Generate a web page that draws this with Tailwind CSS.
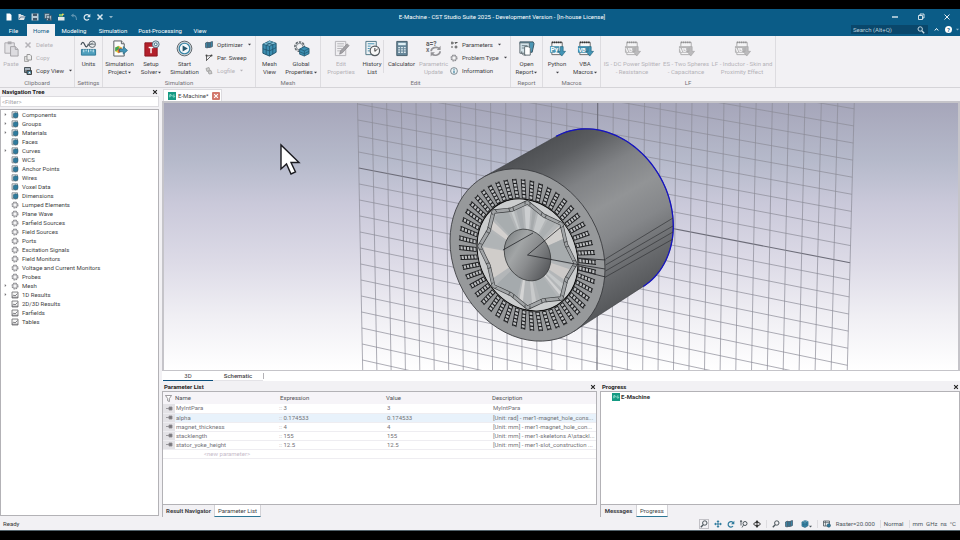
<!DOCTYPE html>
<html lang="en">
<head>
<meta charset="utf-8">
<title>E-Machine - CST Studio Suite 2025</title>
<script src="https://cdn.jsdelivr.net/npm/@tailwindcss/browser@4"></script>
</head>
<body class="h-screen overflow-hidden bg-black font-['Roboto','Noto_Sans',sans-serif] text-[6px] leading-[8px] text-[#3f3f45]">

<svg class="hidden">
  <symbol id="paste" viewBox="0 0 18 18"><path d="M2 3h10v11H2z" fill="#e4e3e6" stroke="#aaa9ad"/><path d="M5 1.5h4v3H5z" fill="#aaa9ad"/><path d="M8 7h5l3 3v7H8z" fill="#dddce0" stroke="#a3a2a6"/><path d="M13 7v3h3" fill="none" stroke="#a3a2a6"/></symbol>
  <symbol id="x" viewBox="0 0 8 8"><path d="M1.500 1.500l5 5M6.500 1.500l-5 5" stroke="currentColor" stroke-width="1.500" fill="none"/></symbol>
  <symbol id="copy" viewBox="0 0 8 8"><path d="M.5 2.500h4v5h-4z" fill="#ddd" stroke="#aaa"/><path d="M3 .5h3l1.500 1.500v4H3z" fill="#eee" stroke="#999"/></symbol>
  <symbol id="copyview" viewBox="0 0 8 8"><path d="M.5.5h6v5h-6z" fill="#7c8489" stroke="#4b5458"/><path d="M1 2h5" stroke="#cde"/><path d="M3 3.500h4.500v4H3z" fill="#3d7892" stroke="#444"/><path d="M4 6.500l1.500-2 1.500 2" fill="#fff"/></symbol>
  <symbol id="units" viewBox="0 0 18 18"><path d="M1 5q2-5 4 0t4-1" fill="none" stroke="#44505a" stroke-width="1.300"/><circle cx="13" cy="4.500" r="3.400" fill="#e8ebed" stroke="#59636a"/><path d="M8 6l6-3M10 4.500h6" stroke="#59636a" stroke-width=".8"/><path d="M1.500 10h15v6h-15z" fill="#4f9fbd" stroke="#2f7897"/><path d="M4 10v3M6.500 10v2M9 10v3M11.500 10v2M14 10v3" stroke="#d8eef5"/></symbol>
  <symbol id="simproj" viewBox="0 0 18 18"><path d="M3 1h8l3 3v13H3z" fill="#fcfcfc" stroke="#555b60"/><path d="M11 1v3h3" fill="#ddd" stroke="#555b60"/><path d="M4.500 8l3.500-2 3.500 2v4L8 14l-3.500-2z" fill="#e2c63b"/><path d="M4.500 8L8 6.500 8.500 10 4.500 12z" fill="#3da55b"/><path d="M7 10l4-2v4l-3 2z" fill="#d8583c"/><path d="M9 9.500h4V7l4.500 4-4.500 4v-2.500H9z" fill="#4294b6" stroke="#23657f" stroke-width=".7"/></symbol>
  <symbol id="setup" viewBox="0 0 18 18"><path d="M2 3h13v14H2z" fill="#b3202b" stroke="#8a141d"/><path d="M6 8h5M8.500 8v6" stroke="#fff" stroke-width="1.500"/><circle cx="13.500" cy="4.500" r="3.600" fill="#cfe0e8" stroke="#567282"/><circle cx="13.500" cy="4.500" r="1.500" fill="#fff" stroke="#3f6a80"/></symbol>
  <symbol id="start" viewBox="0 0 18 18"><circle cx="9" cy="9" r="7.800" fill="#c9ced2" stroke="#5b6368"/><circle cx="9" cy="9" r="5.600" fill="#f4f8fa" stroke="#3483a5" stroke-width="1.200"/><path d="M7 5.800l5.500 3.200L7 12.200z" fill="#25566c"/></symbol>
  <symbol id="cube" viewBox="0 0 18 18"><path d="M2 4.500L9 1l7 2.500v9.500l-7 4-7-3z" fill="#3d8eb1" stroke="#1d536b"/><path d="M2 4.500l7 2 7-3L9 1z" fill="#7fc0d8"/><path d="M9 6.500V17M2 4.500l7 2 7-3M5.500 5.500v10M12.500 5v10M2 9.300l7 2.200 7-3.500M5.500 2.800l7 2.200M12.500 2.300l-7 3.200" fill="none" stroke="#1d536b" stroke-width=".8"/></symbol>
  <symbol id="global" viewBox="0 0 18 18"><circle cx="7" cy="7" r="5" fill="#e6e8ea" stroke="#62696e" stroke-width="1.600" stroke-dasharray="2.500 1.200"/><circle cx="7" cy="7" r="3.500" fill="#f0f1f3" stroke="#62696e" stroke-width=".8"/><path d="M7 9.500l5-2.500 5 2v5.500L12 17l-5-2z" fill="#3d8eb1" stroke="#1d536b" stroke-width=".8"/><path d="M7 9.500l5 2 5-2.500M12 11.500V17M7 12.500l5 2 5-2.500" fill="none" stroke="#1d536b" stroke-width=".7"/></symbol>
  <symbol id="edit" viewBox="0 0 18 18"><path d="M2.500 1.500h11v15h-11z" fill="#efeef1" stroke="#b5b4b8"/><path d="M4.500 4h7M4.500 6.500h7M4.500 9h5M4.500 11.500h4" stroke="#b5b4b8"/><path d="M7 15l1-3.500 7-7.500 2 2-7 7.500z" fill="#a3a2a6" stroke="#858488" stroke-width=".7"/></symbol>
  <symbol id="history" viewBox="0 0 18 18"><path d="M2 1.500h11v14H2z" fill="#eef2f4" stroke="#4d7585"/><path d="M4 4h7M4 6.500h3M4 9h2M4 11.500h2" stroke="#3d8eb1"/><circle cx="11.500" cy="11.500" r="5" fill="#f7f7f7" stroke="#555b60" stroke-width="1.300"/><path d="M11.500 8.500v3.500l3-2.500" fill="none" stroke="#333"/></symbol>
  <symbol id="calc" viewBox="0 0 18 18"><path d="M4 1.500h11v15H4z" fill="#67879a" stroke="#455c69"/><path d="M5.500 3h8v2.500h-8z" fill="#dff0f5"/><path d="M5.500 8h8M5.500 10.500h8M5.500 13h8" stroke="#d9e6ec" stroke-width="1.400" stroke-dasharray="2 1"/></symbol>
  <symbol id="param" viewBox="0 0 18 18"><text x="1" y="6" font-size="7" font-weight="700" fill="#5e5d61">a=?</text><text x="1" y="13" font-size="7" font-weight="700" fill="#77767a">x</text><path d="M6.500 12a5 4 0 0 1 9-2.500M16 12a5 4 0 0 1-9 2.500" fill="none" stroke="#949397" stroke-width="1.800"/><path d="M16.500 6v4.500h-4zM6 17.500V13h4.500z" fill="#949397"/></symbol>
  <symbol id="report" viewBox="0 0 18 18"><path d="M2 2h14l1 2-2 9H4z" fill="#4b96b5" stroke="#35515f"/><path d="M2 3h10v11H2z" fill="#d5e4ea" stroke="#5c6970"/><path d="M4 6h6M4 8.500h3" stroke="#6b7c85"/><path d="M7 7h4l2 2v7H7z" fill="#fff" stroke="#5c6970"/><path d="M4 12q-1 4 4 4" fill="none" stroke="#5c6970"/></symbol>
  <symbol id="py" viewBox="0 0 18 18"><path d="M3 2.500h11v13H3z" fill="#f7f7f8" stroke="#666"/><path d="M3 2.500h11" stroke="#333" stroke-width="2" stroke-dasharray="1.500 .7"/><path d="M1 6.500h10v7H1z" fill="#4f97b3"/><text x="1.500" y="12.500" font-size="7" font-weight="700" fill="#fff">Py</text><path d="M12 7h3v5h2.500L13.500 17l-4-5H12z" fill="#4294b6" stroke="#23657f" stroke-width=".7"/></symbol>
  <symbol id="vba" viewBox="0 0 18 18"><path d="M3 2.500h11v13H3z" fill="#f7f7f8" stroke="#666"/><path d="M3 2.500h11" stroke="#333" stroke-width="2" stroke-dasharray="1.500 .7"/><path d="M1 6.500h11v7H1z" fill="#3f8aa9"/><text x="1.500" y="12.300" font-size="6" font-weight="700" fill="#fff">VB</text><path d="M12 7h3v5h2.500L13.500 17l-4-5H12z" fill="#4294b6" stroke="#23657f" stroke-width=".7"/></symbol>
  <symbol id="opt" viewBox="0 0 8 8"><path d="M.5 2l2-1v6l-2-.5zM3 1.500h2v5H3zM5.500 1l2-.5v5l-2 1z" fill="#3c86a6" stroke="#345" stroke-width=".6"/></symbol>
  <symbol id="sweep" viewBox="0 0 8 8"><path d="M1.500 7V2l5-.5L2 6" fill="none" stroke="#555" stroke-width=".9"/><circle cx="1.500" cy="1.500" r="1" fill="#444"/><circle cx="6.500" cy="1.500" r="1" fill="#444"/></symbol>
  <symbol id="log" viewBox="0 0 8 8"><path d="M1 1.500l3-1 1 3-3 1zM3 4l3-.5 1 3-3 .5z" fill="#ccc" stroke="#aaa"/></symbol>
  <symbol id="params" viewBox="0 0 8 8"><path d="M1 2h3M5.500 1.500h2M1 6h2M4.500 6h3M2 .5v3M6 4.500v3M5 1l1 2" stroke="#555" stroke-width="1"/></symbol>
  <symbol id="gear" viewBox="0 0 8 8"><circle cx="4" cy="4" r="2.900" fill="none" stroke="#8a8a8f" stroke-width="1.200" stroke-dasharray="1.500 .78"/><circle cx="4" cy="4" r="2.200" fill="#f4f4f5" stroke="#8a8a8f" stroke-width=".8"/></symbol>
  <symbol id="info" viewBox="0 0 8 8"><circle cx="4" cy="4" r="3.400" fill="#eef3f5" stroke="#66757d" stroke-width=".8"/><path d="M4 3.500v2.700M4 1.700v1" stroke="#2b7697" stroke-width="1.100"/></symbol>
  <symbol id="tcube" viewBox="0 0 8 8"><path d="M1 .8h5.500v6H1z" fill="#e8ecee" stroke="#777e83" stroke-width=".8"/><path d="M2.300 2.700l2.200-1 2.500.8v3L4.800 7 2.300 6z" fill="#2f7b9d" stroke="#28586d" stroke-width=".5"/></symbol>
  <symbol id="plot" viewBox="0 0 8 8"><path d="M1 1h6v6H1z" fill="#f6f6f6" stroke="#69696d" stroke-width=".8"/><path d="M1.500 5l1.500-1 1 1 2.500-2.500M1 6.200h6" fill="none" stroke="#55555a" stroke-width=".7"/></symbol>
  <symbol id="snap" viewBox="0 0 8 8"><path d="M.5 1h6v5h-6z" fill="#e3e8ea" stroke="#4c565c" stroke-width=".8"/><path d="M.5 2.500h6M2.500 1v5" stroke="#4c565c" stroke-width=".6"/><circle cx="5.800" cy="5.500" r="1.700" fill="#2f7b9d" stroke="#28586d" stroke-width=".6"/></symbol>
  <symbol id="cst" viewBox="0 0 9 9"><path d="M0 0h9v9H0z" fill="#159a83"/><path d="M2 6V3h1.500q1.500 1 0 1.500H2M7.500 3.500q-2-1-2 1t2 1V4.500" fill="none" stroke="#b9efe3" stroke-width=".8"/></symbol>
  <symbol id="mag" viewBox="0 0 8 8"><circle cx="4.800" cy="3" r="2.200" fill="none" stroke="currentColor"/><path d="M3.200 4.700L.8 7.300" stroke="currentColor" stroke-width="1.300"/></symbol>
  <symbol id="tri" viewBox="0 0 4 4"><path d="M0 1h4L2 3.200z" fill="currentColor"/></symbol>
  <symbol id="redo" viewBox="0 0 8 8"><path d="M6.200 3A2.700 2.700 0 1 0 6 6" fill="none" stroke="currentColor" stroke-width="1.200"/><path d="M7.300.8v3.400H4z" fill="currentColor"/></symbol>
  <symbol id="undo" viewBox="0 0 8 8"><path d="M2 2.500q4.500-1 4.500 4.500" fill="none" stroke="currentColor" stroke-width="1.100"/><path d="M3.500.5v4L.8 2.500z" fill="currentColor"/></symbol>
  <symbol id="pan" viewBox="0 0 8 8"><path d="M4 0l1.500 2h-1v1.500H6v-1L8 4 6 5.500v-1H4.500V6h1L4 8 2.500 6h1V4.500H2v1L0 4l2-1.500v1h1.500V2h-1z" fill="#2f7b9d"/></symbol>
</svg>

<div class="flex h-full flex-col border-y-[9px] border-black bg-[#f2f1f4]">

  <header class="shrink-0 bg-[#0b5c87] text-white">
    <div class="flex h-[15px] items-center justify-between">
      <div class="flex items-center gap-[5px] pl-[5px] text-[#dbe8ef]">
        <button aria-label="New"><svg class="size-2" viewBox="0 0 8 8"><path d="M1.500.5h3.500l1.500 1.500v5.500h-5z" fill="#fff"/></svg></button>
        <button aria-label="Open"><svg class="size-2" viewBox="0 0 8 8"><path d="M.5 1h2l1 1h2v1h2L6 7H.5z" fill="#dfe5e8"/><path d="M1 6.500L2.500 4h5" stroke="#357" fill="none" stroke-width=".7"/></svg></button>
        <button aria-label="Save"><svg class="size-2" viewBox="0 0 8 8"><path d="M.5.5h7v7h-7z" fill="#b8cad5"/><path d="M2 .5h4v2.500H2zM2 5h4v2.500H2z" fill="#41576a"/></svg></button>
        <button aria-label="Save all"><svg class="size-2" viewBox="0 0 8 8"><path d="M.5.5h5v5h-5zM2.500 2.500h5v5h-5z" fill="#a7b9c5" stroke="#33495c" stroke-width=".6"/><path d="M4 5.500h2.500v2H4z" fill="#33495c"/></svg></button>
        <button aria-label="Export"><svg class="size-2" viewBox="0 0 8 8"><path d="M1 4h6.500v3.500H1z" fill="#e4e8ea"/><path d="M2 1h3l1 2.500H2z" fill="#7cc46e"/><path d="M5 .5l2.500.5L5 3z" fill="#f2d75b"/></svg></button>
        <button aria-label="Undo" class="text-[#5f93b0]"><svg class="size-2"><use href="#undo"/></svg></button>
        <button aria-label="Redo"><svg class="size-2"><use href="#redo"/></svg></button>
        <button aria-label="Delete"><svg class="size-2"><use href="#x"/></svg></button>
        <button aria-label="Customize" class="text-[#8fb4c8]"><svg class="size-1"><use href="#tri"/></svg></button>
      </div>
      <h1>E-Machine - CST Studio Suite 2025 - Development Version - [In-house License]</h1>
      <div class="flex items-center justify-end gap-[18px] pr-[9px]">
        <button aria-label="Minimize"><svg class="size-2" viewBox="0 0 8 8"><path d="M1 4h6" stroke="#fff" stroke-width="1.200"/></svg></button>
        <button aria-label="Restore"><svg class="size-2" viewBox="0 0 8 8"><path d="M1.500 2.500h4v4h-4zM3 2.500V1h4v4H5.500" fill="none" stroke="#fff" stroke-width=".8"/></svg></button>
        <button aria-label="Close"><svg class="size-2" viewBox="0 0 8 8"><path d="M1.500 1.500l5 5M6.500 1.500l-5 5" stroke="#fff" stroke-width=".9"/></svg></button>
      </div>
    </div>
    <div class="flex h-3 items-stretch justify-between">
      <nav class="flex leading-[13px]">
        <a href="#" class="w-[27px] text-center">File</a>
        <a href="#" class="w-7 bg-[#f2f1f4] text-center text-[#0b5c87]">Home</a>
        <a href="#" class="w-[38px] text-center">Modeling</a>
        <a href="#" class="w-10 text-center">Simulation</a>
        <a href="#" class="w-[54px] text-center">Post-Processing</a>
        <a href="#" class="w-[26px] text-center">View</a>
      </nav>
      <div class="flex items-center gap-[6px] pb-px">
        <label class="flex h-[9px] w-[77px] items-center bg-[#0a476b] pr-[3px]"><input type="text" aria-label="Search" placeholder="Search (Alt+Q)" class="w-full min-w-0 bg-transparent pl-[2px] placeholder:text-[#b9cfdb]"><svg class="size-2 shrink-0 -scale-x-100 text-[#c5d8e2]"><use href="#mag"/></svg></label>
        <button aria-label="Collapse ribbon"><svg class="size-[5px]" viewBox="0 0 5 5"><path d="M.8 3.500l1.700-2 1.700 2" fill="none" stroke="#fff"/></svg></button>
        <button aria-label="Help" class="size-[7px] rounded-full bg-white text-center font-bold leading-[7px] text-[#0b5c87]">?</button>
        <svg class="-ml-[2px] mr-px size-[3px] text-[#8fb4c8]"><use href="#tri"/></svg>
      </div>
    </div>
  </header>

  <section id="ribbon" aria-label="Ribbon" class="flex h-[52px] shrink-0 overflow-hidden border-b border-[#d5d4d8]"></section>

  <main class="flex min-h-0 flex-1 gap-[3px]">
    <aside class="flex w-[159px] shrink-0 flex-col pb-px">
      <div class="flex h-2 items-center justify-between pl-[2px] pr-px font-bold text-[#222]"><h2>Navigation Tree</h2><button aria-label="Close navigation tree"><svg class="size-[6px]"><use href="#x"/></svg></button></div>
      <input type="text" aria-label="Filter" placeholder="&lt;Filter&gt;" class="mb-[2px] h-[11px] border border-[#dddce0] bg-white pl-px placeholder:text-[#a5a4a8]">
      <ul id="tree" class="min-h-0 flex-1 overflow-hidden border border-[#b3b2b6] bg-white"></ul>
    </aside>

    <div class="flex min-w-0 flex-1 flex-col">
      <div class="flex h-[13px] shrink-0 pl-px">
        <div class="mt-px flex w-[59px] items-center gap-[2px] border border-b-0 border-[#dcdbdf] bg-white pl-1"><svg class="size-2 shrink-0"><use href="#cst"/></svg><span>E-Machine*</span><button aria-label="Close tab" class="ml-px flex size-2 shrink-0 items-center justify-center rounded-[1px] bg-[#d2776b] text-white"><svg class="size-[6px]"><use href="#x"/></svg></button></div>
      </div>
      <div class="min-h-0 flex-1 border-2 border-b border-[#c5c4c9]">
        <svg class="block size-full bg-white" viewBox="164 103 794 267" preserveAspectRatio="xMidYMid slice" role="img" aria-label="3D model view">
          <defs>
            <linearGradient id="sky" x1="0" y1="0" x2="0" y2="1"><stop offset="0" stop-color="#a6a6ba"/><stop offset=".22" stop-color="#b6bacb"/><stop offset=".38" stop-color="#cac9da"/><stop offset=".6" stop-color="#dddbe7"/><stop offset=".8" stop-color="#f0eff4"/><stop offset="1" stop-color="#fff"/></linearGradient>
            <linearGradient id="bodyFill" gradientUnits="userSpaceOnUse" x1="523" y1="153" x2="614" y2="309"><stop offset="0" stop-color="#4e5053"/><stop offset=".12" stop-color="#5b5d60"/><stop offset=".3" stop-color="#808285"/><stop offset=".48" stop-color="#929496"/><stop offset=".65" stop-color="#85878a"/><stop offset=".85" stop-color="#66686b"/><stop offset="1" stop-color="#55575a"/></linearGradient>
            <linearGradient id="bore" x1="0" y1=".1" x2="1" y2=".7"><stop offset="0" stop-color="#777b7d"/><stop offset=".35" stop-color="#a2a5a6"/><stop offset=".6" stop-color="#8a8c8e"/><stop offset="1" stop-color="#55575a"/></linearGradient>
          </defs>
          <path d="M-500 103h2500v267H-500z" fill="url(#sky)"/>
          <g id="grid" fill="none" stroke="#8b8b96" stroke-width=".7"></g>
          <g id="body"></g>
          <path d="M605.500 259L673 218M605.500 265L673 226M605.500 271L673 232M605.500 277L673 239" fill="none" stroke="#333538" stroke-width=".7"/>
          <g transform="matrix(.775 .14 0 .85 527.500 255)">
            <circle r="100" fill="#97999b" stroke="#35373a"/>
            <g id="slots"></g>
            <circle r="65" fill="#b3b6b8" stroke="#111" stroke-width="1.600"/>
            <g id="facets"></g>
            <g id="magnets"></g>
            <circle r="30" fill="url(#bore)" stroke="#3a3c3e"/>
          </g>
          <path d="M527.500 255L561 227M527.500 255L575 264L605 269M503 250L533 233M578 258L605.500 260M578 270L605.500 277" fill="none" stroke="#232528" stroke-width=".8"/>
          <path d="M281 145v24l5.500-5 4.500 10 4.500-2-4.500-9.500h8z" fill="#fff" stroke="#1b1b20" stroke-width="1.400"/>
        </svg>
      </div>
      <div class="flex h-[10px] shrink-0 bg-white">
        <button class="ml-px w-[50px] border-b border-[#0b4f7d] text-center">3D</button>
        <button class="w-[50px] border-b border-[#e4e3e7] text-center font-medium">Schematic</button>
        <span class="my-[2px] border-l border-[#b3b2b6]"></span>
      </div>

      <div class="flex h-[136px] shrink-0 gap-[3px] pt-[2px]">
        <section class="flex min-w-0 flex-[435] flex-col">
          <div class="flex h-2 items-center justify-between pl-[2px] pr-px font-bold text-[#222]"><h2>Parameter List</h2><button aria-label="Close parameter list"><svg class="size-[6px]"><use href="#x"/></svg></button></div>
          <div class="min-h-0 flex-1 overflow-hidden border border-[#b3b2b6] bg-white">
            <table class="w-full table-fixed text-left text-[#737277]">
              <colgroup><col class="w-3"><col class="w-[104px]"><col class="w-[107px]"><col class="w-[105px]"><col></colgroup>
              <thead><tr class="h-3 bg-[#f6f4f8] text-[#505055]"><th aria-label="Filter"><svg class="ml-[2px] size-[7px]" viewBox="0 0 8 8"><path d="M.5.5h7L5 4v3.500l-2-1V4z" fill="#fff" stroke="#8a898d"/></svg></th><th class="font-normal">Name</th><th class="pl-px font-normal">Expression</th><th class="font-normal">Value</th><th class="pl-px font-normal">Description</th></tr></thead>
              <tbody id="rows"></tbody>
            </table>
          </div>
          <div class="flex h-3 shrink-0 items-stretch">
            <button class="w-[52px] border-l border-[#b3b2b6] text-center font-bold">Result Navigator</button>
            <button class="w-[47px] border border-t-0 border-[#d3d2d6] border-b-[#2c7696] bg-white text-center">Parameter List</button>
          </div>
        </section>
        <section class="flex min-w-0 flex-[360] flex-col">
          <div class="flex h-2 items-center justify-between pl-[2px] pr-px font-bold text-[#222]"><h2>Progress</h2><button aria-label="Close progress"><svg class="size-[6px]"><use href="#x"/></svg></button></div>
          <div class="flex min-h-0 flex-1 items-start border border-[#b3b2b6] bg-white pl-[11px] pt-px text-[#333]"><svg class="size-2"><use href="#cst"/></svg><span class="pl-px font-bold">E-Machine</span></div>
          <div class="flex h-3 shrink-0 items-stretch">
            <button class="w-9 border-l border-[#b3b2b6] text-center font-bold">Messages</button>
            <button class="w-8 border border-t-0 border-[#d3d2d6] border-b-[#2c7696] bg-white text-center">Progress</button>
          </div>
        </section>
      </div>
    </div>
  </main>

  <footer class="flex h-[14px] shrink-0 items-center justify-between border-b border-[#53636c] pl-[3px] pr-1 text-[#333]">
    <span>Ready</span>
    <div class="flex items-center gap-[5px] text-[#4c565c]">
      <button aria-label="Zoom window" class="border border-[#c2c1c6]"><svg class="size-2"><use href="#mag"/></svg></button>
      <button aria-label="Pan"><svg class="size-2"><use href="#pan"/></svg></button>
      <button aria-label="Rotate" class="text-[#2f7b9d]"><svg class="size-2"><use href="#redo"/></svg></button>
      <button aria-label="Zoom"><svg class="size-2" viewBox="0 0 8 8"><circle cx="5" cy="3.500" r="2" fill="none" stroke="#4c565c"/><path d="M3.500 5L2 7.500M1 .5v5M0 2l1-1.500L2 2" fill="none" stroke="#4c565c" stroke-width=".9"/></svg></button>
      <button aria-label="Rotate view"><svg class="size-2" viewBox="0 0 8 8"><path d="M4 0l1.500 2h-3zM4 8l1.500-2h-3z" fill="#333"/><ellipse cx="4" cy="4" rx="3.300" ry="1.600" fill="none" stroke="#333"/><path d="M4 1v6" stroke="#333"/></svg></button>
      <span class="h-2 border-l border-[#dddce0]"></span>
      <button aria-label="Find"><svg class="size-2"><use href="#mag"/></svg></button>
      <button aria-label="Cutting plane"><svg class="size-2"><use href="#opt"/></svg></button>
      <button aria-label="View" class="ml-[3px] flex items-end"><svg class="size-2"><use href="#cube"/></svg><svg class="size-[3px]"><use href="#tri"/></svg></button>
      <span class="h-2 border-l border-[#dddce0]"></span>
      <button aria-label="Snap"><svg class="size-2"><use href="#snap"/></svg></button>
      <span>Raster=20.000</span>
      <span class="border-l border-[#dddce0] pl-[3px]">Normal</span>
      <span class="flex gap-[3px] border-l border-[#dddce0] pl-[3px]"><span>mm</span><span>GHz</span><span>ns</span><span>°C</span></span>
    </div>
  </footer>
</div>

<script>
const caret = '<svg class="ml-px inline-block size-[3px] align-middle"><use href="#tri"/></svg>';
// Large ribbon button: width class, icon, two label lines, state (1 disabled, 2 disabled with grey icon), caret
const big = (w, icon, a, b, off, menu) =>
  `<button class="${w} ${off ? 'text-[#b5b3b8]' : ''} flex shrink-0 flex-col items-center whitespace-nowrap"><svg class="${off === 2 ? 'grayscale opacity-50' : ''} mb-[3px] size-[17px]"><use href="#${icon}"/></svg><span>${a}</span><span>${b}${menu ? caret : ''}</span></button>`;
const small = (icon, t, off, menu) =>
  `<button class="${off ? 'text-[#b5b3b8]' : ''} flex h-[13px] items-center gap-1 whitespace-nowrap"><svg class="size-2"><use href="#${icon}"/></svg><span>${t}</span>${menu ? '<svg class="ml-px size-[3px]"><use href="#tri"/></svg>' : ''}</button>`;
const col = s => `<div class="-mt-[2px] flex flex-col pl-[2px]">${s}</div>`;
const group = (w, name, s) =>
  `<div class="${w} flex shrink-0 flex-col justify-between border-r border-[#dddce0]"><div class="flex h-[41px] pt-1">${s}</div><div class="text-center text-[#737277]">${name}</div></div>`;
document.getElementById('ribbon').innerHTML =
  group('w-[75px]', 'Clipboard', big('w-[22px]', 'paste', 'Paste', '', 1) + col(small('x', 'Delete', 1) + small('copy', 'Copy', 1) + small('copyview', 'Copy View', 0, 1))) +
  group('w-[28px]', 'Settings', big('w-[27px]', 'units', 'Units', '')) +
  group('w-[153px]', 'Simulation', big('w-[33px]', 'simproj', 'Simulation', 'Project', 0, 1) + big('w-[30px]', 'setup', 'Setup', 'Solver', 0, 1) + big('w-[37px]', 'start', 'Start', 'Simulation') + col(small('opt', 'Optimizer', 0, 1) + small('sweep', 'Par. Sweep') + small('log', 'Logfile', 1, 1))) +
  group('w-[65px]', 'Mesh', big('w-[27px]', 'cube', 'Mesh', 'View') + big('w-[36px]', 'global', 'Global', 'Properties', 0, 1)) +
  group('w-[190px]', 'Edit', big('w-[40px]', 'edit', 'Edit', 'Properties', 1) + big('w-[22px]', 'history', 'History', 'List') + '<span class="mb-1 border-l border-[#dddce0]"></span>' + big('w-[35px]', 'calc', 'Calculator', '') + big('w-[29px]', 'param', 'Parametric', 'Update', 1) + col(small('params', 'Parameters', 0, 1) + small('gear', 'Problem Type', 0, 1) + small('info', 'Information'))) +
  group('w-[32px]', 'Report', big('w-[31px]', 'report', 'Open', 'Report', 0, 1)) +
  group('w-[58px]', 'Macros', big('w-[28px]', 'py', 'Python', '', 0, 1) + big('w-[28px]', 'vba', 'VBA', 'Macros', 0, 1)) +
  group('w-[175px]', 'LF', big('w-[62px]', 'vba', 'IS - DC Power Splitter', '- Resistance', 2) + big('w-[46px]', 'vba', 'ES - Two Spheres', '- Capacitance', 2) + big('w-[66px]', 'vba', 'LF - Inductor - Skin and', 'Proximity Effect', 2));

const tree = [['Components','tcube',1],['Groups','tcube',1],['Materials','tcube',1],['Faces','tcube'],['Curves','tcube',1],['WCS','tcube'],['Anchor Points','tcube'],['Wires','tcube'],['Voxel Data','tcube'],['Dimensions','tcube'],['Lumped Elements','gear'],['Plane Wave','gear'],['Farfield Sources','gear'],['Field Sources','gear'],['Ports','gear'],['Excitation Signals','gear'],['Field Monitors','gear'],['Voltage and Current Monitors','gear'],['Probes','gear'],['Mesh','gear',1],['1D Results','plot',1],['2D/3D Results','plot'],['Farfields','plot'],['Tables','plot']];
document.getElementById('tree').innerHTML = tree.map(([t, icon, open]) =>
  `<li class="flex h-[9px] items-center pl-[3px]"><svg class="size-[3px] -rotate-90 text-[#77767a] ${open ? '' : 'invisible'}"><use href="#tri"/></svg><svg class="ml-1 size-2"><use href="#${icon}"/></svg><span class="pl-[3px]">${t}</span></li>`).join('');

const params = [['MyIntPara','3','MyIntPara'],['alpha','0.174533','[Unit: rad] - mer1-magnet_hole_cons...'],['magnet_thickness','4','[Unit: mm] - mer1-magnet_hole_con...'],['stacklength','155','[Unit: mm] - mer1-skeletons A\\stackl...'],['stator_yoke_height','12.5','[Unit: mm] - mer1-slot_construction ...']];
document.getElementById('rows').innerHTML = params.map(([n, v, d], i) =>
  `<tr class="h-[9px] border-b border-[#eeedf1] ${i === 1 ? 'bg-[#e8f2fb]' : ''}"><td class="bg-[#e3e2e6]"><svg class="ml-[3px] h-[5px] w-[7px]" viewBox="0 0 7 5"><path d="M0 2.500h3M3 1h3v3H3z" stroke="#8a898d" fill="#77767a" stroke-width=".8"/></svg></td><td class="pl-px">${n}</td><td><span class="text-[#aaa9ad]">::</span> ${v}</td><td class="pl-px">${v}</td><td class="whitespace-nowrap pl-[2px]">${d}</td></tr>`).join('') +
  '<tr class="h-[9px] border-b border-[#eeedf1]"><td></td><td class="pl-[29px] text-[#c7bccb]">&lt;new parameter&gt;</td><td></td><td></td><td></td></tr>';

// Reference grid plane, drawn in perspective
const lx = y => 357.5 + (y - 103) / 267 * 5.2, rx = y => 854.3 - (y - 103) / 267 * 7;
let g = '';
for (let k = -9; k <= 13; k++) {
  const a = 168 + 16 * k, b = 262.7 + 17.1 * k;
  g += `<path d="M${lx(a)} ${a}L${rx(b)} ${b}"${k ? '' : ' stroke="#6c6c78" stroke-width="1.1"'}/>`;
}
for (let j = 0; j <= 32; j++) {
  const f = (14.5 * j + .032 * j * j) / 496.8;
  g += `<path d="M${357.5 + 496.8 * f} 103L${362.7 + 484.6 * f} 370"${j === 16 ? ' stroke="#6c6c78" stroke-width="1.1"' : ''}/>`;
}
document.getElementById('grid').innerHTML = g;

// Cylinder side: hull of the front and back rims
const rim = (s, cx, cy, deg) => {
  const u = s * Math.cos(deg * Math.PI / 180), v = s * Math.sin(deg * Math.PI / 180);
  return `${(cx + 77.5 * u).toFixed(2)} ${(cy + 14 * u + 85 * v).toFixed(2)}`;
};
const arc = [];
for (let a = -124; a <= 53; a += 3) arc.push(rim(.97, 598.1, 212.4, a));
const back = arc.join('L');
document.getElementById('body').innerHTML =
  `<path d="M${rim(1, 527.5, 255, -124)}L${back}L${rim(1, 527.5, 255, 53)}z" fill="url(#bodyFill)" stroke="#3a3c3f" stroke-width=".6"/><path d="M${back}" fill="none" stroke="#1513c4" stroke-width="1.3"/>`;

const P = (r, deg) => `${(r * Math.cos(deg * Math.PI / 180)).toFixed(2)} ${(r * Math.sin(deg * Math.PI / 180)).toFixed(2)}`;
let s = '';
for (let i = 0; i < 48; i++) {
  const a = (i + .5) * 7.5, d = `M${P(66, a)}L${P(88.5, a)}`;
  s += `<path d="${d}" stroke="#1d1e20" stroke-width="5.8"/><path d="${d}" stroke="#bbbdbf" stroke-width="3.6" stroke-dasharray="2.8 1.4" stroke-dashoffset="-1"/>`;
}
document.getElementById('slots').innerHTML = s;

const shades = [[-75,-63,'#c6c9ca'],[-60,-50,'#abafb1'],[-45,-30,'#d0cecc'],[-30,2,'#a6abad'],[8,24,'#cdcac8'],[30,36,'#c6c9ca'],[40,44,'#d0d1d2'],[48,72,'#abb0b2'],[78,84,'#c8cacb'],[96,101,'#d4d4d4'],[104,134,'#a5aaad'],[142,180,'#d0cdca'],[182,202,'#b0b4b6'],[206,216,'#d3d0ce'],[220,242,'#a8adaf'],[246,250,'#c6cacb'],[254,262,'#a8acaf'],[266,274,'#ccced0'],[277,282,'#a6aaac']];
document.getElementById('facets').innerHTML = shades.map(([a, b, c]) => `<path d="M${P(29, a)}L${P(57, a)}L${P(57, b)}L${P(29, b)}z" fill="${c}"/>`).join('');
const pts = [];
for (let i = 0; i < 16; i++) pts.push(P(i % 2 ? 54 : 62, i * 22.5));
const d = 'M' + pts.join('L') + 'z';
let m = `<path d="M${P(64.3, 0)}A64.3 64.3 0 1 1 ${P(64.3, 359.9)}z${d}" fill="#cbcdce" fill-rule="evenodd"/><path d="${d}" fill="none" stroke="#3a3c3e" stroke-width="5"/><path d="${d}" fill="none" stroke="#a1a4a6" stroke-width="3.4"/>`;
for (let i = 0; i < 16; i++) for (const o of [-3, 3]) m += `<path d="M${P(i % 2 ? 52 : 59, i * 22.5 + o)}L${P(i % 2 ? 57 : 63, i * 22.5 + o)}" stroke="#3a3c3e" stroke-width=".9"/>`;
document.getElementById('magnets').innerHTML = m;
</script>
</body>
</html>
